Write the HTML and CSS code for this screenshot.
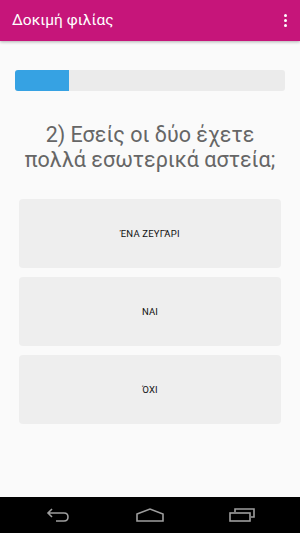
FILE: index.html
```html
<!DOCTYPE html>
<html lang="el">
<head>
    <meta charset="UTF-8">
    <meta name="viewport" content="width=device-width, initial-scale=1.0">
    <title>Δοκιμή φιλίας</title>
    <link rel="stylesheet" href="styles.css">
</head>
<body>
    <div class="screen">
        <header class="app-bar">
            <span class="app-title">Δοκιμή φιλίας</span>
            <span class="overflow">
                <i></i><i></i><i></i>
            </span>
        </header>

        <main class="quiz">
            <div class="progress-bar">
                <div class="progress-fill" style="width: 20%"></div>
            </div>

            <h2 class="question">2) Εσείς οι δύο έχετε πολλά εσωτερικά αστεία;</h2>

            <div class="answers">
                <button class="answer-btn">ΈΝΑ ΖΕΥΓΆΡΙ</button>
                <button class="answer-btn">ΝΑΙ</button>
                <button class="answer-btn">ΌΧΙ</button>
            </div>
        </main>

        <nav class="nav-bar">
            <svg class="nav-icon" width="24" height="14" viewBox="0 0 24 14">
                <path d="M6 1 L2 5 L6 9 M2 5 H18 Q22 5 22 9 Q22 13 18 13 H10" fill="none" stroke="#9e9e9e" stroke-width="1.6"/>
            </svg>
            <svg class="nav-icon" width="28" height="14" viewBox="0 0 28 14">
                <path d="M1 6 L14 1 L27 6 V13 H1 Z" fill="none" stroke="#9e9e9e" stroke-width="1.6"/>
            </svg>
            <svg class="nav-icon" width="26" height="14" viewBox="0 0 26 14">
                <path d="M6 4 V1 H25 V9 H22" fill="none" stroke="#9e9e9e" stroke-width="1.6"/>
                <rect x="1" y="5" width="20" height="8" fill="none" stroke="#9e9e9e" stroke-width="1.6"/>
            </svg>
        </nav>
    </div>
</body>
</html>
```

FILE: styles.css
```css
:root {
    --bar-color: #c6157a;
    --page-color: #fafafa;
    --track-color: #ebebeb;
    --fill-color: #36a2e3;
    --button-color: #eeeeee;
    --question-color: #666666;
}

html, body {
    margin: 0;
    padding: 0;
}

body {
    font-family: Roboto, 'Noto Sans', sans-serif;
    background-color: var(--page-color);
}

.screen {
    width: 300px;
    height: 533px;
    display: flex;
    flex-direction: column;
    overflow: hidden;
}

.app-bar {
    height: 41px;
    flex-shrink: 0;
    background-color: var(--bar-color);
    color: white;
    display: flex;
    align-items: center;
    justify-content: space-between;
    padding: 0 12px 0 12px;
    box-shadow: 0 1px 3px rgba(0,0,0,0.3);
    position: relative;
    z-index: 1;
}

.app-title {
    font-size: 15.5px;
    margin-top: -1px;
}

.overflow {
    display: flex;
    flex-direction: column;
    gap: 2px;
    margin-right: 1px;
    margin-top: -1px;
}

.overflow i {
    display: block;
    width: 3px;
    height: 3px;
    border-radius: 50%;
    background-color: white;
}

.quiz {
    flex: 1;
    padding: 29px 15px 0 15px;
}

.progress-bar {
    height: 21px;
    background-color: var(--track-color);
    border-radius: 3px;
    overflow: hidden;
}

.progress-fill {
    height: 100%;
    background-color: var(--fill-color);
}

.question {
    margin: 31px 0 27px 0;
    font-weight: normal;
    font-size: 21.5px;
    line-height: 25px;
    text-align: center;
    color: var(--question-color);
}

.answers {
    display: flex;
    flex-direction: column;
    gap: 9px;
    padding: 0 4px;
}

.answer-btn {
    height: 69px;
    border: none;
    border-radius: 4px;
    background-color: var(--button-color);
    font-family: Roboto, 'Noto Sans', sans-serif;
    font-size: 9.5px;
    color: #111;
    letter-spacing: 0.2px;
    padding: 0;
}

.nav-bar {
    height: 36px;
    flex-shrink: 0;
    background-color: black;
    display: flex;
    align-items: center;
    justify-content: space-between;
    padding: 0 45px 0 46px;
}

.nav-icon {
    display: block;
}
```
